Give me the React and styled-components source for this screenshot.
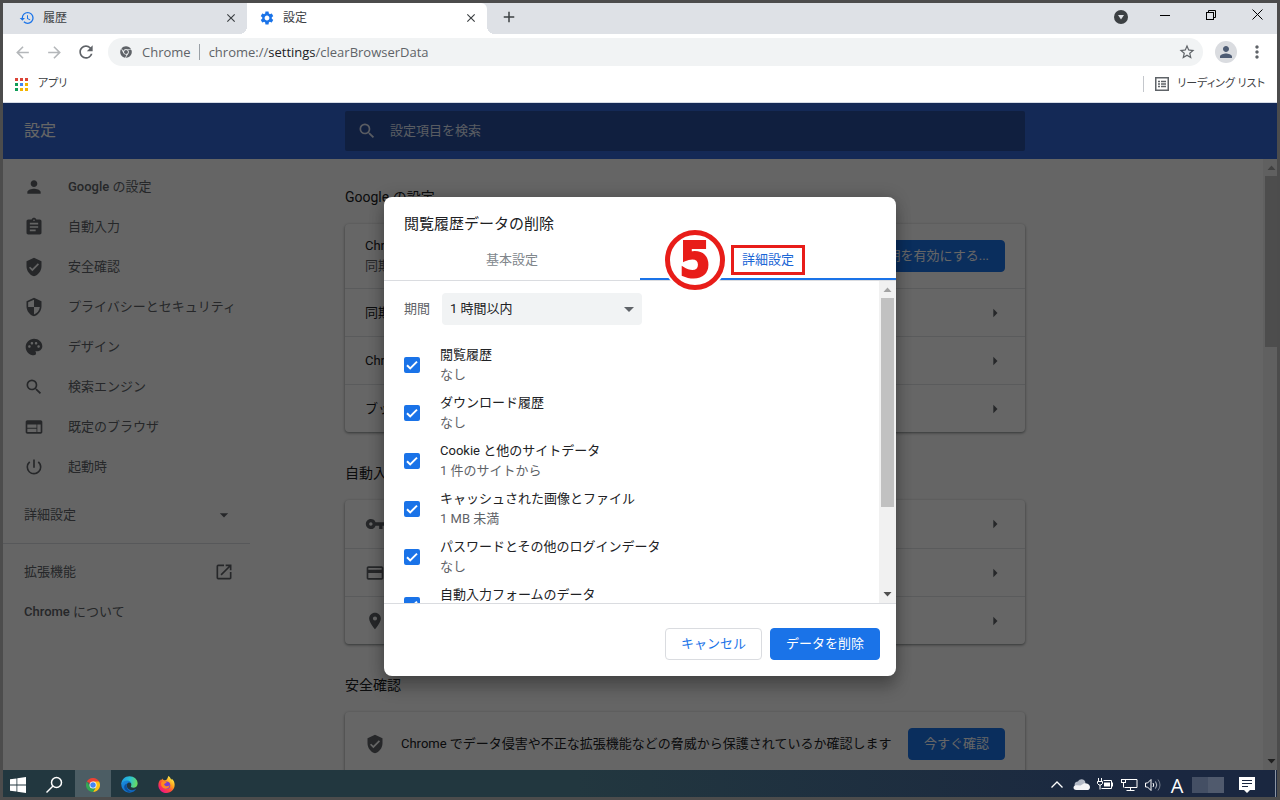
import React from "react";
import styled, { createGlobalStyle, css } from "styled-components";
import {
  MdAdd, MdArrowBack, MdArrowDropDown, MdArrowForward, MdArrowRight, MdAssignment, MdClose,
  MdCreditCard, MdHistory, MdMoreVert, MdOpenInNew, MdPalette, MdPerson, MdPlace,
  MdPowerSettingsNew, MdRefresh, MdSearch, MdSecurity, MdSettings, MdStarBorder,
  MdVerifiedUser, MdVpnKey, MdWeb,
} from "react-icons/md";
import { FaChrome } from "react-icons/fa";

const GlobalStyle = createGlobalStyle`
  *, *::before, *::after { box-sizing: border-box; }
  body {
    margin: 0;
    font-family: Roboto, "Noto Sans CJK JP", sans-serif;
    font-size: 13px;
    line-height: 20px;
    color: #202124;
  }
  button, input, select { font: inherit; color: inherit; }
  button { border: 0; padding: 0; background: none; cursor: pointer; }
  a { color: inherit; text-decoration: none; }
  svg { display: block; flex: none; }
`;

/* ---------- window frame ---------- */

const Screen = styled.div`
  display: flex;
  flex-direction: column;
  height: 100vh;
  border: 3px solid #4c4c4c;
  overflow: hidden;
`;

const TabStrip = styled.header`
  display: flex;
  height: 31px;
  padding-left: 4px;
  background: #dee1e6;
  flex: none;
`;

const Tab = styled.div`
  position: relative;
  display: flex;
  align-items: center;
  gap: 8px;
  width: 240px;
  padding: 0 8px 2px 12px;
  font-size: 12px;
  color: #3c4043;
  ${(p) => p.$active && css`
    background: #fff;
    border-radius: 0 6px 0 0;
    &::before, &::after {
      content: "";
      position: absolute;
      bottom: 0;
      width: 8px;
      height: 8px;
    }
    &::before { right: 100%; background: radial-gradient(circle at 0 0, #dee1e6 8px, #fff 8px); }
    &::after { left: 100%; background: radial-gradient(circle at 100% 0, #dee1e6 8px, #fff 8px); }
  `}
`;

const TabTitle = styled.span`
  flex: 1;
`;

const IconButton = styled.button`
  display: grid;
  place-items: center;
  width: ${(p) => p.$w || 16}px;
  height: ${(p) => p.$h || 28}px;
  color: ${(p) => p.$color || "#5f6368"};
`;

const WindowControls = styled.div`
  display: flex;
  margin-left: auto;
  margin-right: -3px;
`;

const Toolbar = styled.div`
  display: flex;
  align-items: center;
  height: 36px;
  padding-left: 3px;
  background: #fff;
  flex: none;
`;

const AddressBar = styled.div`
  display: flex;
  align-items: center;
  flex: 1;
  height: 28px;
  margin: 0 12px 0 6px;
  padding: 0 9px 0 12px;
  border-radius: 14px;
  background: #f1f3f4;
  color: #5f6368;
  font-family: "Open Sans", "Noto Sans", sans-serif;
  font-size: 13px;
`;

const SiteLabel = styled.span`
  margin-left: 10px;
  padding-right: 8px;
  border-right: 1px solid #9aa0a6;
  line-height: 16px;
`;

const Url = styled.span`
  flex: 1;
  padding-left: 9px;
  b { font-weight: 400; color: #202124; }
`;

const Avatar = styled.button`
  display: grid;
  place-items: center;
  width: 22px;
  height: 22px;
  border-radius: 50%;
  background: #dadce0;
  color: #4d5b73;
`;

const Bookmarks = styled.nav`
  display: flex;
  align-items: center;
  height: 33px;
  padding: 0 12px 4px;
  border-bottom: 1px solid #d5dbe6;
  background: #fff;
  flex: none;
`;

const Bookmark = styled.a`
  display: flex;
  align-items: center;
  gap: ${(p) => (p.$last ? 8 : 10)}px;
  font-size: 11px;
  line-height: 16px;
  color: #3c4043;
  font-feature-settings: "palt";
  ${(p) => p.$last && css`
    margin-left: auto;
    padding-left: 11px;
    border-left: 1px solid #c4c7cc;
  `}
`;

/* ---------- settings page ---------- */

const Page = styled.div`
  position: relative;
  display: flex;
  flex-direction: column;
  flex: 1;
  min-height: 0;
  background: #fdfdfd;
`;

const PageHeader = styled.div`
  display: flex;
  align-items: center;
  height: 56px;
  background: #3367d6;
  color: #fff;
  flex: none;
`;

const PageTitle = styled.h1`
  flex: 0 0 342px;
  margin: 0;
  padding-left: 21px;
  font-size: 16px;
  font-weight: 400;
`;

const SearchField = styled.label`
  display: flex;
  align-items: center;
  gap: 13px;
  flex: 0 1 680px;
  height: 40px;
  padding: 0 12px;
  border-radius: 2px;
  background: #2a4e9f;
  color: #dfe6f5;
  input {
    flex: 1;
    padding: 0;
    border: 0;
    outline: 0;
    background: none;
  }
  input::placeholder { color: #dfe6f5; opacity: 1; }
`;

const PageBody = styled.div`
  display: flex;
  flex: 1;
  min-height: 0;
  overflow: hidden;
`;

const Sidebar = styled.nav`
  flex: 0 0 247px;
  padding-top: 8px;
  margin-right: 95px;
  color: #5f6368;
`;

const NavItem = styled.a`
  display: flex;
  align-items: center;
  gap: 24px;
  height: 40px;
  padding: 0 13px 0 21px;
  white-space: nowrap;
  ${(p) => p.$spread && css`
    justify-content: space-between;
    padding-right: 16px;
  `}
  b { font-weight: 500; }
`;

const NavGroup = styled.div`
  padding: 8px 0;
  & + & { border-top: 1px solid #dadce0; }
`;

const Content = styled.main`
  flex: 0 1 680px;
  padding-top: 28px;
`;

const Section = styled.section`
  margin-bottom: 31px;
`;

const SectionTitle = styled.h2`
  margin: 0 0 17px;
  font-size: 14px;
  line-height: 20px;
  font-weight: 400;
`;

const Card = styled.div`
  border-radius: 4px;
  background: #fff;
  box-shadow: 0 1px 2px rgba(60, 64, 67, 0.4), 0 1px 3px 1px rgba(60, 64, 67, 0.2);
`;

const CardRow = styled.div`
  display: flex;
  align-items: center;
  gap: 16px;
  height: ${(p) => (p.$tall ? 64 : 48)}px;
  padding: 0 20px;
  white-space: nowrap;
  & + & { border-top: 1px solid #e2e3e5; }
  > svg { color: #5f6368; }
`;

const RowText = styled.div`
  flex: 1;
`;

const Line = styled.span`
  display: block;
  color: ${(p) => (p.$soft ? "#5f6368" : "inherit")};
`;

const Button = styled.button`
  height: 32px;
  padding: 0 15px;
  border: 1px solid ${(p) => (p.$primary ? "#1a73e8" : "#dadce0")};
  border-radius: 4px;
  background: ${(p) => (p.$primary ? "#1a73e8" : "#fff")};
  color: ${(p) => (p.$primary ? "#fff" : "#1a73e8")};
`;

/* ---------- scroll bars ---------- */

const Track = styled.div`
  display: flex;
  flex-direction: column;
  width: ${(p) => p.$w}px;
  margin-left: auto;
  padding: 0 ${(p) => p.$r}px 0 2px;
  background: #f1f1f1;
  flex: none;
`;

const Thumb = styled.div`
  height: ${(p) => p.$size};
  background: #c1c1c1;
`;

const ScrollArrow = styled.svg`
  width: 9px;
  height: 17px;
  margin: 0 auto;
  fill: ${(p) => (p.$dim ? "#a3a3a3" : "#505050")};
  ${(p) => !p.$dim && css`margin-top: auto;`}
`;

function ScrollBar({ width, right, size }) {
  return (
    <Track $w={width} $r={right} aria-hidden="true">
      <ScrollArrow $dim viewBox="0 0 9 17"><path d="M0.5 11h8l-4-4.500z" /></ScrollArrow>
      <Thumb $size={size} />
      <ScrollArrow viewBox="0 0 9 17"><path d="M0.5 6h8l-4 4.500z" /></ScrollArrow>
    </Track>
  );
}

/* ---------- dialog ---------- */

const Backdrop = styled.div`
  position: absolute;
  inset: 0;
  display: grid;
  place-items: center;
  background: rgba(0, 0, 0, 0.6);
`;

const Dialog = styled.section`
  width: 512px;
  max-width: 90%;
  border-radius: 8px;
  background: #fff;
  box-shadow: 0 0 16px rgba(0, 0, 0, 0.2), 0 12px 16px rgba(0, 0, 0, 0.24);
`;

const DialogTitle = styled.h2`
  margin: 0;
  padding: 17px 20px 7px;
  font-size: 15px;
  line-height: 20px;
  font-weight: 400;
`;

const Tabs = styled.div`
  display: flex;
  height: 40px;
  border-bottom: 1px solid #dadce0;
`;

const DialogTab = styled.button`
  flex: 1;
  display: flex;
  align-items: center;
  justify-content: center;
  padding-bottom: 2px;
  color: ${(p) => (p.$selected ? "#1a66d6" : "#80868b")};
  ${(p) => p.$selected && css`
    padding-bottom: 0;
    border-bottom: 2px solid #1a73e8;
  `}
`;

const Highlight = styled.span`
  position: relative;
  height: 30px;
  padding: 0 8px;
  border: 3px solid #e81d19;
  line-height: 24px;
`;

const StepBadge = styled.strong`
  position: absolute;
  top: -18px;
  right: calc(100% + 9px);
  width: 60px;
  height: 60px;
  border: 5px solid #e81d19;
  border-radius: 50%;
  background: #fff;
  box-shadow: 0 0 0 2px #fff;
  color: #e81d19;
  font: 700 50px/50px "DejaVu Sans Condensed", "DejaVu Sans", sans-serif;
  text-align: center;
  -webkit-text-stroke: 2px #e81d19;
`;

const DialogBody = styled.div`
  display: flex;
  height: 322px;
  overflow: hidden;
`;

const Options = styled.div`
  flex: 1;
  padding: 12px 20px 0;
`;

const RangeRow = styled.div`
  display: flex;
  align-items: center;
  gap: 12px;
  margin-bottom: 16px;
  color: #5f6368;
`;

const SelectBox = styled.span`
  display: grid;
  align-items: center;
  width: 200px;
  > * { grid-area: 1 / 1; }
  svg { justify-self: end; margin-right: 8px; pointer-events: none; }
  select {
    appearance: none;
    height: 32px;
    padding: 0 8px;
    border: 0;
    border-radius: 4px;
    background: #f1f3f4;
    color: #202124;
  }
`;

const Option = styled.div`
  display: flex;
  align-items: center;
  gap: 20px;
  height: 48px;
`;

const CheckBox = styled.span`
  display: grid;
  > * { grid-area: 1 / 1; }
  svg { pointer-events: none; }
  input {
    appearance: none;
    width: 16px;
    height: 16px;
    margin: 0;
    border: 2px solid #5f6368;
    border-radius: 2px;
  }
  input:checked { border-color: #1a73e8; background: #1a73e8; }
`;

const OptionText = styled.label`
  min-height: 40px;
`;

const DialogFooter = styled.div`
  display: flex;
  justify-content: flex-end;
  gap: 8px;
  padding: 24px 16px 16px;
  border-top: 1px solid #dadce0;
`;

/* ---------- taskbar ---------- */

const TaskBar = styled.footer`
  display: flex;
  align-items: center;
  height: 27px;
  background: linear-gradient(90deg, #22373f 0%, #22373f 45%, #1a2740 90%);
  color: #fff;
  flex: none;
`;

const TaskButton = styled.button`
  display: grid;
  place-items: center;
  width: ${(p) => p.$w || 37}px;
  height: 27px;
  padding-top: 2px;
  background: ${(p) => (p.$on ? "#4c5d64" : "none")};
`;

const Tray = styled.div`
  display: flex;
  align-items: center;
  margin: 0 1px 0 auto;
  padding-right: 10px;
  border-right: 1px solid #8b95a5;
`;

const ImeMode = styled.button`
  width: 24px;
  height: 27px;
  padding-top: 4px;
  font-family: "Open Sans", sans-serif;
  font-size: 20px;
  line-height: 20px;
  color: #fff;
`;

const Clock = styled.div`
  width: 32px;
  height: 16px;
  margin: 2px 4px 0 3px;
  background: linear-gradient(90deg, #444f64 0 50%, #505a6d 50%);
`;

/* ---------- drawings ---------- */

const AppsIcon = () => {
  const colors = ["#db4437", "#db4437", "#db4437", "#0f9d58", "#4285f4", "#f4b400", "#0f9d58", "#f4b400", "#f4b400"];
  return (
    <svg width="13" height="13" viewBox="0 0 13 13">
      {colors.map((c, i) => (
        <rect key={i} x={(i % 3) * 5} y={Math.floor(i / 3) * 5} width="3" height="3" fill={c} />
      ))}
    </svg>
  );
};

const ReadingListIcon = () => (
  <svg width="14" height="14" viewBox="0 0 14 14" fill="none" stroke="#5f6368">
    <rect x="0.75" y="0.75" width="12.500" height="12.500" strokeWidth="1.500" />
    <path d="M3 4.500h2M6 4.500h5M3 7h2M6 7h5M3 9.500h2M6 9.500h5" strokeWidth="1.400" />
  </svg>
);

const CheckMark = () => (
  <svg width="16" height="16" viewBox="0 0 16 16" fill="none" stroke="#fff" strokeWidth="2">
    <path d="M3 8.200l3.200 3.200L13 4.600" />
  </svg>
);

const WindowsLogo = () => (
  <svg width="16" height="16" viewBox="0 0 16 16" fill="#fff">
    <path d="M0 2.300l6.500-.9v6.200H0zM7.300 1.300L16 0v7.600H7.300zM0 8.400h6.500v6.200L0 13.700zM7.300 8.400H16V16l-8.700-1.300z" />
  </svg>
);

const ChromeLogo = () => (
  <svg width="14" height="14" viewBox="0 0 48 48">
    <path d="M24 24L3.200 12A24 24 0 0 1 44.800 12z" fill="#ea4335" />
    <path d="M24 12h20.800A24 24 0 0 1 24 48l10.400-18z" fill="#fbc116" />
    <path d="M3.200 12A24 24 0 0 0 24 48l10.400-18A12 12 0 0 1 13.600 30z" fill="#34a853" />
    <circle cx="24" cy="24" r="12" fill="#fff" />
    <circle cx="24" cy="24" r="9.500" fill="#4285f4" />
  </svg>
);

const EdgeLogo = () => (
  <svg width="17" height="17" viewBox="0 0 48 48">
    <defs>
      <linearGradient id="edgeTop" x1="0" y1="0.300" x2="1" y2="0.500">
        <stop offset="0" stopColor="#1f9be6" />
        <stop offset="0.500" stopColor="#2cc3d2" />
        <stop offset="1" stopColor="#6bdc5c" />
      </linearGradient>
      <linearGradient id="edgeLow" x1="0" y1="0" x2="1" y2="1">
        <stop offset="0" stopColor="#1b8fe0" />
        <stop offset="1" stopColor="#0d5cb4" />
      </linearGradient>
    </defs>
    <path d="M1 24C1 10 11 1 24 1s23 9 23 20c0 8-6 12-12 12-5 0-8-2-7-4 3-4 1-12-7-12C11 17 3 22 1 24z" fill="url(#edgeTop)" />
    <path d="M1 24c1-7 9-11 17-11 6 0 11 4 12 9-2-3-5-4-8-4-6 2-7 9-4 15 4 7 14 10 25 4-4 7-11 10-18 10C11 47 1 37 1 24z" fill="url(#edgeLow)" />
    <path d="M17 22c-3 7 0 19 13 24C19 46 9 40 9 31c0-5 4-9 8-9z" fill="#0c4f9c" />
  </svg>
);

const FirefoxLogo = () => (
  <svg width="17" height="17" viewBox="0 0 48 48">
    <defs>
      <linearGradient id="foxBody" x1="0.850" y1="0.100" x2="0.200" y2="0.900">
        <stop offset="0" stopColor="#fff14f" />
        <stop offset="0.350" stopColor="#ffa41c" />
        <stop offset="0.650" stopColor="#ff4a3a" />
        <stop offset="1" stopColor="#f0177f" />
      </linearGradient>
    </defs>
    <path d="M29 0c5 3 7 7 8 10 2 0 2-1 2-2 5 4 8 10 8 17 0 13-10 23-23 23S1 38 1 26C1 18 4 13 7 9c0 2 0 3 1 4 2-2 3-4 4-6 1 3 4 5 8 5 5 0 7-5 9-12z" fill="url(#foxBody)" />
    <circle cx="24" cy="26" r="10.500" fill="#7a3fd0" />
    <path d="M10 17c6-4 12-2 15 2-4 0-5 3-8 4 2 6 10 8 16 3-2 9-11 13-18 8-6-4-8-11-5-17z" fill="#ff8a1f" />
  </svg>
);

const TaskSearchIcon = () => (
  <svg width="18" height="18" viewBox="0 0 18 18" fill="none" stroke="#fff" strokeWidth="1.500">
    <circle cx="11.500" cy="6.500" r="5" />
    <path d="M8 10L1.500 16.500" />
  </svg>
);

const ChevronUp = () => (
  <svg width="12" height="7" viewBox="0 0 12 7" fill="none" stroke="#fff" strokeWidth="1.300">
    <path d="M0.5 6.500L6 1l5.500 5.500" />
  </svg>
);

const CloudIcon = () => (
  <svg width="17" height="11" viewBox="0 0 17 11">
    <path d="M2 7.500C.5 4 3.500 2.300 5 2.600 6.500-.6 11.500-.6 12.500 3.500L8 7.500z" fill="#b3bac6" />
    <path d="M3.500 11C1 11 .2 9.300.6 8 1 6.500 2.500 6 4 6.200l3.500.3 4-2.500c3 .2 5.500 1.700 5.500 4.200 0 2-1.500 2.800-3 2.800z" fill="#f3f4f6" />
  </svg>
);

const BatteryIcon = () => (
  <svg width="17" height="13" viewBox="0 0 17 13" fill="none" stroke="#fff">
    <path d="M6.500 2.500h8v8H4.500" />
    <path d="M15.500 4.500v4" />
    <rect x="7" y="4.500" width="6" height="4" fill="#fff" stroke="none" />
    <path d="M1.500 0v3M4.500 0v3M.5 3.500h5v2L4 7H2L.5 5.500zM3 7v4.500" />
  </svg>
);

const MonitorIcon = () => (
  <svg width="17" height="14" viewBox="0 0 17 14" fill="none" stroke="#fff">
    <path d="M5 1.500h11v8H3.500M9.500 9.500v3M5.500 12.500h8" />
    <rect x="0.5" y="1.500" width="4" height="3" />
    <path d="M2.500 4.500v5" />
  </svg>
);

const SpeakerIcon = () => (
  <svg width="17" height="14" viewBox="0 0 17 14" fill="none" stroke="#fff">
    <path d="M.5 5h2l3.500-3.500v11L2.500 9h-2z" />
    <path d="M8 5q1.500 2 0 4" />
    <path d="M10.500 3.500q2.500 3.500 0 7" opacity=".7" />
    <path d="M13 1.500q4 5.500 0 11" opacity=".4" />
  </svg>
);

const NoticeIcon = () => (
  <svg width="16" height="16" viewBox="0 0 16 16">
    <path d="M0 0h16v13h-5l-3 3-3-3H0z" fill="#fff" />
    <path d="M3 3.500h10M3 6.500h10M3 9.500h6" stroke="#1a2740" />
  </svg>
);

/* ---------- data ---------- */

const navItems = [
  [MdPerson, <><b>Google</b> の設定</>],
  [MdAssignment, "自動入力"],
  [MdVerifiedUser, "安全確認"],
  [MdSecurity, "プライバシーとセキュリティ"],
  [MdPalette, "デザイン"],
  [MdSearch, "検索エンジン"],
  [MdWeb, "既定のブラウザ"],
  [MdPowerSettingsNew, "起動時"],
];

const googleRows = ["同期と Google サービス", "Chrome の名前と画像を管理する", "ブックマークと設定をインポート"];

const autofillRows = [
  [MdVpnKey, "パスワード"],
  [MdCreditCard, "お支払い方法"],
  [MdPlace, "住所やその他の情報"],
];

const options = [
  ["history", "閲覧履歴", "なし"],
  ["downloads", "ダウンロード履歴", "なし"],
  ["cookies", "Cookie と他のサイトデータ", "1 件のサイトから"],
  ["cache", "キャッシュされた画像とファイル", "1 MB 未満"],
  ["passwords", "パスワードとその他のログインデータ", "なし"],
  ["forms", "自動入力フォームのデータ", null],
];

/* ---------- parts ---------- */

function BrowserChrome() {
  return (
    <>
      <TabStrip>
        <Tab>
          <MdHistory size={16} color="#1a73e8" />
          <TabTitle>履歴</TabTitle>
          <IconButton aria-label="タブを閉じる" $color="#3c4043"><MdClose size={14} /></IconButton>
        </Tab>
        <Tab $active>
          <MdSettings size={16} color="#1a73e8" />
          <TabTitle>設定</TabTitle>
          <IconButton aria-label="タブを閉じる" $color="#3c4043"><MdClose size={14} /></IconButton>
        </Tab>
        <IconButton $w={44} aria-label="新しいタブ" $color="#3c4043"><MdAdd size={18} /></IconButton>
        <WindowControls>
          <IconButton $w={42} aria-label="タブを検索">
            <svg width="14" height="14" viewBox="0 0 14 14">
              <circle cx="7" cy="7" r="7" fill="#3c4043" />
              <path d="M4 5h6l-3 4.500z" fill="#dee1e6" />
            </svg>
          </IconButton>
          <IconButton $w={46} $h={23} aria-label="最小化">
            <svg width="10" height="10" viewBox="0 0 10 10" stroke="#000"><path d="M0 5.500h10" /></svg>
          </IconButton>
          <IconButton $w={46} $h={23} aria-label="元に戻す">
            <svg width="10" height="10" viewBox="0 0 10 10" fill="none" stroke="#000">
              <rect x="0.5" y="2.500" width="7" height="7" />
              <path d="M2.500 2.500v-2h7v7h-2" />
            </svg>
          </IconButton>
          <IconButton $w={46} $h={23} aria-label="閉じる">
            <svg width="11" height="11" viewBox="0 0 11 11" stroke="#000"><path d="M.5.5l10 10M10.500.5l-10 10" /></svg>
          </IconButton>
        </WindowControls>
      </TabStrip>
      <Toolbar>
        <IconButton $w={32} aria-label="戻る" $color="#b4b7ba"><MdArrowBack size={19} /></IconButton>
        <IconButton $w={32} aria-label="進む" $color="#b4b7ba"><MdArrowForward size={19} /></IconButton>
        <IconButton $w={32} aria-label="再読み込み"><MdRefresh size={20} /></IconButton>
        <AddressBar>
          <FaChrome size={12} />
          <SiteLabel>Chrome</SiteLabel>
          <Url>chrome://<b>settings</b>/clearBrowserData</Url>
          <IconButton aria-label="ブックマークに追加"><MdStarBorder size={18} /></IconButton>
        </AddressBar>
        <Avatar aria-label="プロフィール"><MdPerson size={18} /></Avatar>
        <IconButton $w={40} aria-label="メニュー"><MdMoreVert size={20} /></IconButton>
      </Toolbar>
      <Bookmarks>
        <Bookmark href="#apps"><AppsIcon />アプリ</Bookmark>
        <Bookmark $last href="#reading"><ReadingListIcon />リーディング リスト</Bookmark>
      </Bookmarks>
    </>
  );
}

function SettingsSidebar() {
  return (
    <Sidebar>
      {navItems.map(([Icon, label], i) => (
        <NavItem key={i} href="#section"><Icon size={20} /><span>{label}</span></NavItem>
      ))}
      <NavGroup>
        <NavItem $spread href="#advanced">詳細設定<MdArrowDropDown size={20} /></NavItem>
      </NavGroup>
      <NavGroup>
        <NavItem $spread href="#extensions">拡張機能<MdOpenInNew size={20} /></NavItem>
        <NavItem $spread href="#about"><span><b>Chrome</b> について</span></NavItem>
      </NavGroup>
    </Sidebar>
  );
}

function SettingsContent() {
  return (
    <Content>
      <Section>
        <SectionTitle>Google の設定</SectionTitle>
        <Card>
          <CardRow $tall>
            <RowText>
              <Line>Chrome で Google の機能を活用</Line>
              <Line $soft>同期してカスタマイズ</Line>
            </RowText>
            <Button $primary>同期を有効にする...</Button>
          </CardRow>
          {googleRows.map((label) => (
            <CardRow key={label}><RowText>{label}</RowText><MdArrowRight size={20} /></CardRow>
          ))}
        </Card>
      </Section>
      <Section>
        <SectionTitle>自動入力</SectionTitle>
        <Card>
          {autofillRows.map(([Icon, label]) => (
            <CardRow key={label}><Icon size={20} /><RowText>{label}</RowText><MdArrowRight size={20} /></CardRow>
          ))}
        </Card>
      </Section>
      <Section>
        <SectionTitle>安全確認</SectionTitle>
        <Card>
          <CardRow $tall>
            <MdVerifiedUser size={20} />
            <RowText>Chrome でデータ侵害や不正な拡張機能などの脅威から保護されているか確認します</RowText>
            <Button $primary>今すぐ確認</Button>
          </CardRow>
        </Card>
      </Section>
    </Content>
  );
}

function ClearDataDialog() {
  return (
    <Dialog role="dialog" aria-labelledby="clear-title">
      <DialogTitle id="clear-title">閲覧履歴データの削除</DialogTitle>
      <Tabs role="tablist">
        <DialogTab role="tab">基本設定</DialogTab>
        <DialogTab role="tab" $selected aria-selected="true">
          <Highlight>詳細設定<StepBadge>5</StepBadge></Highlight>
        </DialogTab>
      </Tabs>
      <DialogBody>
        <Options>
          <RangeRow>
            <label htmlFor="range">期間</label>
            <SelectBox>
              <select id="range" defaultValue="hour"><option value="hour">1 時間以内</option></select>
              <svg width="10" height="5" viewBox="0 0 10 5" fill="#5f6368"><path d="M0 0h10L5 5z" /></svg>
            </SelectBox>
          </RangeRow>
          {options.map(([id, label, note]) => (
            <Option key={id}>
              <CheckBox><input id={id} type="checkbox" defaultChecked /><CheckMark /></CheckBox>
              <OptionText htmlFor={id}>
                <Line>{label}</Line>
                {note && <Line $soft>{note}</Line>}
              </OptionText>
            </Option>
          ))}
        </Options>
        <ScrollBar width={17} right={2} size="209px" />
      </DialogBody>
      <DialogFooter>
        <Button>キャンセル</Button>
        <Button $primary>データを削除</Button>
      </DialogFooter>
    </Dialog>
  );
}

function WindowsTaskBar() {
  return (
    <TaskBar>
      <TaskButton $w={30} aria-label="スタート"><WindowsLogo /></TaskButton>
      <TaskButton $w={42} aria-label="検索"><TaskSearchIcon /></TaskButton>
      <TaskButton $w={36} $on aria-label="Chrome"><ChromeLogo /></TaskButton>
      <TaskButton aria-label="Edge"><EdgeLogo /></TaskButton>
      <TaskButton aria-label="Firefox"><FirefoxLogo /></TaskButton>
      <Tray>
        <TaskButton $w={24} aria-label="隠れているアイコン"><ChevronUp /></TaskButton>
        <TaskButton $w={24} aria-label="OneDrive"><CloudIcon /></TaskButton>
        <TaskButton $w={24} aria-label="電源"><BatteryIcon /></TaskButton>
        <TaskButton $w={24} aria-label="ネットワーク"><MonitorIcon /></TaskButton>
        <TaskButton $w={24} aria-label="音量"><SpeakerIcon /></TaskButton>
        <ImeMode aria-label="入力モード">A</ImeMode>
        <Clock />
        <TaskButton $w={37} aria-label="通知"><NoticeIcon /></TaskButton>
      </Tray>
    </TaskBar>
  );
}

export default function App() {
  return (
    <>
      <GlobalStyle />
      <Screen>
        <BrowserChrome />
        <Page>
          <PageHeader>
            <PageTitle>設定</PageTitle>
            <SearchField>
              <MdSearch size={20} />
              <input type="search" placeholder="設定項目を検索" aria-label="設定項目を検索" />
            </SearchField>
          </PageHeader>
          <PageBody>
            <SettingsSidebar />
            <SettingsContent />
            <ScrollBar width={14} right={0} size="171px" />
          </PageBody>
          <Backdrop><ClearDataDialog /></Backdrop>
        </Page>
        <WindowsTaskBar />
      </Screen>
    </>
  );
}
